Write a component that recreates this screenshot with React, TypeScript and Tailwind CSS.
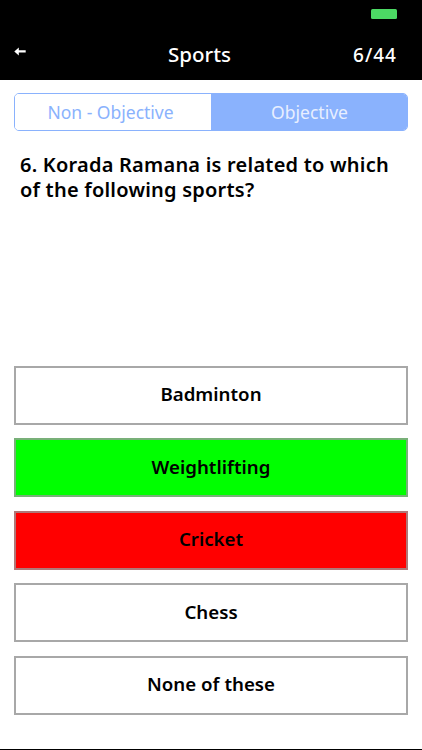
const options = [
  { label: "Badminton", color: "bg-white", border: "border-[#a8a8a8]" },
  { label: "Weightlifting", color: "bg-[#00ff00]", border: "border-[#78b078]" },
  { label: "Cricket", color: "bg-[#ff0000]", border: "border-[#b07878]" },
  { label: "Chess", color: "bg-white", border: "border-[#a8a8a8]" },
  { label: "None of these", color: "bg-white", border: "border-[#a8a8a8]" },
];

export default function App() {
  return (
    <div className="flex h-[750px] w-[422px] flex-col overflow-hidden bg-white font-['Noto_Sans',sans-serif] text-black">
      {/* header */}
      <div className="h-[80px] shrink-0 bg-black text-white">
        <div className="flex justify-end pr-[25px] pt-[9px]">
          <div className="h-[10px] w-[26px] rounded-[1.5px] bg-[#4cd964]" />
        </div>
        <div className="flex items-center justify-between pl-[14px] pr-[25px] pt-[21px]">
          <svg width="12" height="9" viewBox="0 0 12 9" className="mb-[7px]">
            <path d="M0.3 4.5 L4.8 0.5 V3.2 H11.7 V5.6 H4.8 V8.5 Z" fill="#fff" />
          </svg>
          <span className="mb-[2px] ml-[20px] text-[20.5px] leading-[28px] font-medium">Sports</span>
          <span className="text-[19px] leading-[28px] font-medium tracking-[1px]">6/44</span>
        </div>
      </div>

      {/* segmented control */}
      <div className="mx-[14px] mt-[13px] flex h-[38px] shrink-0 overflow-hidden rounded-[5px] border border-[#8ab2fd] text-[17.5px]">
        <div className="flex w-[196px] items-center justify-center bg-white pr-[5px] text-[#8ab2fd]">Non - Objective</div>
        <div className="flex flex-1 items-center justify-center bg-[#8ab2fd] pl-[1px] text-[#e8efff]">Objective</div>
      </div>

      <p className="mx-[20px] mt-[22px] h-[213px] shrink-0 text-[20px] leading-[24.5px] font-semibold tracking-[0.22px]">
        6. Korada Ramana is related to which of the following sports?
      </p>

      {/* answers */}
      <div className="mx-[14px] flex flex-col gap-[13.4px]">
        {options.map((o) => (
          <div
            key={o.label}
            className={`flex h-[59px] items-center justify-center border-2 pb-[2px] text-[18.7px] font-semibold ${o.color} ${o.border}`}
          >
            {o.label}
          </div>
        ))}
      </div>

      <div className="mt-auto h-px bg-black" />
    </div>
  );
}
